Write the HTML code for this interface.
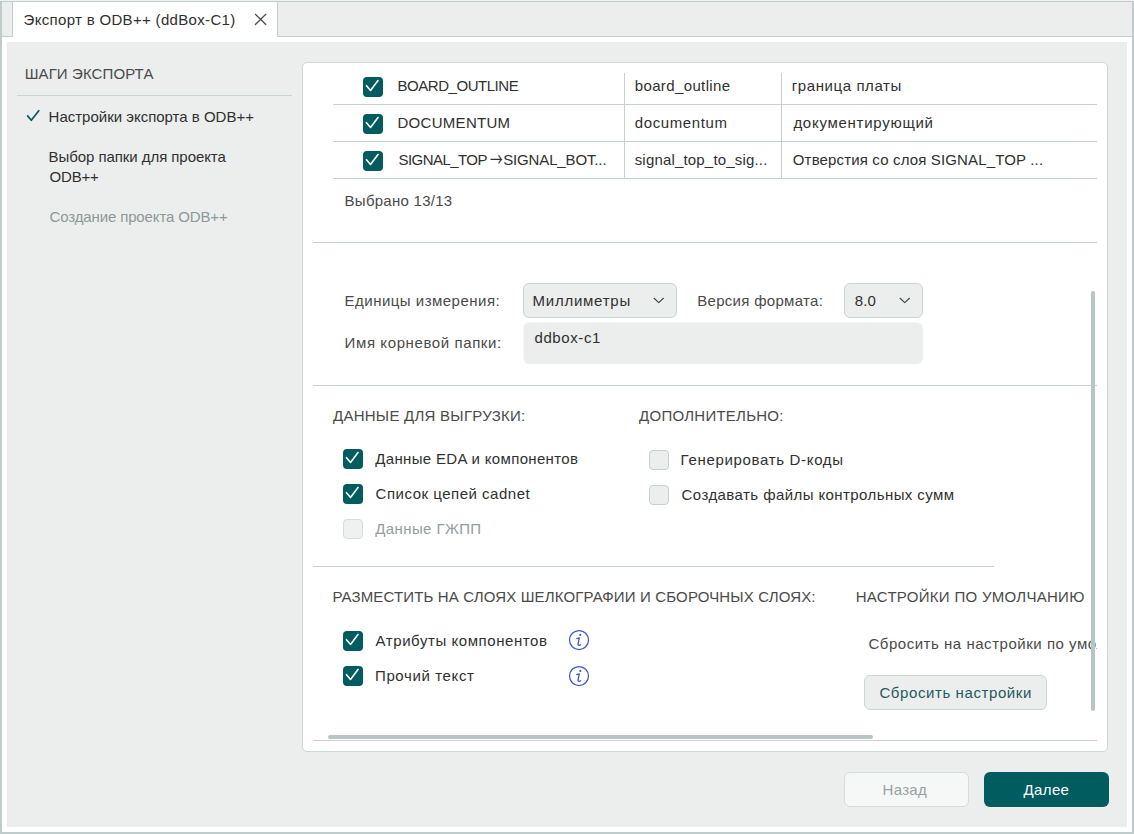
<!DOCTYPE html>
<html lang="ru">
<head>
<meta charset="utf-8">
<title>Экспорт в ODB++</title>
<style>
html,body{margin:0;padding:0}
body{width:1134px;height:834px;position:relative;overflow:hidden;background:#fff;font-family:"Liberation Sans",sans-serif;font-size:15px;color:#2b2b2b}
.abs{position:absolute}
.t{position:absolute;white-space:nowrap;line-height:20px;height:20px}
.hl{position:absolute;height:1px;background:#c6d2d2}
.vl{position:absolute;width:1px;background:#c6d2d2}
.cb{position:absolute;width:20px;height:20px;border-radius:4px;background:#005c5f;box-sizing:border-box}
.cb svg{position:absolute;left:0;top:0}
.cb.off{background:#eceeed;border:1px solid #c3d1d1}
.cb.dis{background:#eff1f0;border:1px solid #d3dddd}
.info{position:absolute;width:22px;height:22px}
</style>
</head>
<body>
<!-- window frame -->
<div class="abs" style="left:0;top:0;width:1134px;height:834px;background:#fff"></div>
<div class="abs" style="left:0;top:0;width:1134px;height:1px;background:#eef1f1"></div>
<div class="abs" style="left:0;top:1px;width:1134px;height:1px;background:#c3cfcf"></div>
<div class="abs" style="left:0;top:1px;width:2px;height:833px;background:#c0cccc"></div>
<div class="abs" style="left:1132px;top:1px;width:2px;height:833px;background:#c0cccc"></div>
<div class="abs" style="left:0;top:832px;width:1134px;height:2px;background:#c0cccc"></div>
<!-- tab bar -->
<div class="abs" style="left:2px;top:2px;width:1130px;height:34px;background:#eceeed"></div>
<div class="abs" style="left:2px;top:36px;width:1130px;height:1px;background:#c3cfcf"></div>
<div class="abs" style="left:12px;top:2px;width:266px;height:35px;background:#fff;border-left:1px solid #c3cfcf;border-right:1px solid #c3cfcf;box-sizing:border-box"></div>
<svg class="abs" style="left:253px;top:12px" width="16" height="16" viewBox="0 0 16 16"><path d="M2.4 2.3 L12.8 12.5 M12.8 2.3 L2.4 12.5" stroke="#475252" stroke-width="1.25" fill="none" stroke-linecap="round"/></svg>
<!-- main gray panel -->
<div class="abs" style="left:7px;top:42px;width:1120px;height:785px;background:#eceeed"></div>
<!-- sidebar -->
<div class="hl" style="left:17px;top:95px;width:275px;background:#c9d5d5"></div>
<svg class="abs" style="left:25px;top:108px" width="16" height="16" viewBox="0 0 16 16"><path d="M2.6 7.9 L6.3 12.3 L13.8 2.7" stroke="#005c5f" stroke-width="1.7" fill="none" stroke-linecap="round" stroke-linejoin="round"/></svg>
<!-- card -->
<div class="abs" style="left:302px;top:62px;width:806px;height:690px;background:#fff;border:1px solid #cdd8d8;border-radius:5px;box-sizing:border-box"></div>
<!-- table -->
<div class="hl" style="left:333px;top:104px;width:764px"></div>
<div class="hl" style="left:333px;top:141px;width:764px"></div>
<div class="hl" style="left:333px;top:178px;width:764px"></div>
<div class="vl" style="left:624px;top:73px;height:105px"></div>
<div class="vl" style="left:781px;top:73px;height:105px"></div>
<div class="cb" style="left:363px;top:77px"><svg width="20" height="20" viewBox="0 0 20 20"><path d="M3.5 8.7 L7.5 13.5 L15 3.5" stroke="#fff" stroke-width="1.6" fill="none" stroke-linecap="round" stroke-linejoin="round"/></svg></div>
<div class="cb" style="left:363px;top:114px"><svg width="20" height="20" viewBox="0 0 20 20"><path d="M3.5 8.7 L7.5 13.5 L15 3.5" stroke="#fff" stroke-width="1.6" fill="none" stroke-linecap="round" stroke-linejoin="round"/></svg></div>
<div class="cb" style="left:363px;top:151px"><svg width="20" height="20" viewBox="0 0 20 20"><path d="M3.5 8.7 L7.5 13.5 L15 3.5" stroke="#fff" stroke-width="1.6" fill="none" stroke-linecap="round" stroke-linejoin="round"/></svg></div>
<!-- section separators -->
<div class="hl" style="left:313px;top:242px;width:784px"></div>
<div class="hl" style="left:313px;top:385px;width:784px"></div>
<div class="hl" style="left:313px;top:566px;width:681px"></div>
<div class="hl" style="left:313px;top:740px;width:784px"></div>
<!-- selects / input -->
<div class="abs" style="left:523px;top:283px;width:154px;height:35px;background:#eceeed;border:1px solid #c9d6d6;border-radius:6px;box-sizing:border-box"></div>
<svg class="abs" style="left:651px;top:293px" width="16" height="16" viewBox="0 0 16 16"><path d="M3.1 5.3 L7.75 9.6 L12.4 5.3" stroke="#404a4a" stroke-width="1.2" fill="none" stroke-linecap="round" stroke-linejoin="round"/></svg>
<div class="abs" style="left:844px;top:283px;width:79px;height:35px;background:#eceeed;border:1px solid #c9d6d6;border-radius:6px;box-sizing:border-box"></div>
<svg class="abs" style="left:897px;top:293px" width="16" height="16" viewBox="0 0 16 16"><path d="M3.1 5.3 L7.75 9.6 L12.4 5.3" stroke="#404a4a" stroke-width="1.2" fill="none" stroke-linecap="round" stroke-linejoin="round"/></svg>
<div class="abs" style="left:523px;top:322px;width:400px;height:42px;background:#eceeed;border:1px solid #f4f6f5;border-bottom-color:#eceeed;border-right-color:#eff1f0;border-radius:6px;box-sizing:border-box"></div>
<!-- checkboxes: data -->
<div class="cb" style="left:343px;top:449px"><svg width="20" height="20" viewBox="0 0 20 20"><path d="M3.5 8.7 L7.5 13.5 L15 3.5" stroke="#fff" stroke-width="1.6" fill="none" stroke-linecap="round" stroke-linejoin="round"/></svg></div>
<div class="cb" style="left:343px;top:484px"><svg width="20" height="20" viewBox="0 0 20 20"><path d="M3.5 8.7 L7.5 13.5 L15 3.5" stroke="#fff" stroke-width="1.6" fill="none" stroke-linecap="round" stroke-linejoin="round"/></svg></div>
<div class="cb dis" style="left:343px;top:519px"></div>
<div class="cb off" style="left:649px;top:450px"></div>
<div class="cb off" style="left:649px;top:485px"></div>
<!-- checkboxes: place -->
<div class="cb" style="left:343px;top:631px"><svg width="20" height="20" viewBox="0 0 20 20"><path d="M3.5 8.7 L7.5 13.5 L15 3.5" stroke="#fff" stroke-width="1.6" fill="none" stroke-linecap="round" stroke-linejoin="round"/></svg></div>
<div class="cb" style="left:343px;top:666px"><svg width="20" height="20" viewBox="0 0 20 20"><path d="M3.5 8.7 L7.5 13.5 L15 3.5" stroke="#fff" stroke-width="1.6" fill="none" stroke-linecap="round" stroke-linejoin="round"/></svg></div>
<svg class="info" style="left:568px;top:629px" viewBox="0 0 22 22"><circle cx="11" cy="11" r="9.5" fill="none" stroke="#3f57c8" stroke-width="1.25"/><circle cx="12.3" cy="5.9" r="1.05" fill="#3f57c8"/><path d="M8.8 9.6 L11.3 8.8 L10 15 Q9.8 16.5 11.2 16.3 L12.6 15.8" fill="none" stroke="#3f57c8" stroke-width="1.25" stroke-linecap="round" stroke-linejoin="round"/></svg>
<svg class="info" style="left:568px;top:665px" viewBox="0 0 22 22"><circle cx="11" cy="11" r="9.5" fill="none" stroke="#3f57c8" stroke-width="1.25"/><circle cx="12.3" cy="5.9" r="1.05" fill="#3f57c8"/><path d="M8.8 9.6 L11.3 8.8 L10 15 Q9.8 16.5 11.2 16.3 L12.6 15.8" fill="none" stroke="#3f57c8" stroke-width="1.25" stroke-linecap="round" stroke-linejoin="round"/></svg>
<!-- reset button -->
<div class="abs" style="left:864px;top:675px;width:183px;height:35px;background:#eceeed;border:1px solid #cbd7d7;border-radius:6px;box-sizing:border-box"></div>
<!-- nav buttons -->
<div class="abs" style="left:844px;top:772px;width:125px;height:35px;background:#f6f8f7;border:1px solid #d3dddd;border-radius:6px;box-sizing:border-box"></div>
<div class="abs" style="left:984px;top:772px;width:125px;height:35px;background:#005c5f;border-radius:6px"></div>
<!-- texts -->
<span class="t" style="left:23.6px;top:10px;color:#303030;letter-spacing:0.322px">Экспорт в ODB++ (ddBox-C1)</span>
<span class="t" style="left:24.7px;top:64px;color:#4a4a4a;letter-spacing:0.104px">ШАГИ ЭКСПОРТА</span>
<span class="t" style="left:48.6px;top:107px;color:#303030;letter-spacing:-0.004px">Настройки экспорта в ODB++</span>
<span class="t" style="left:48.6px;top:147px;color:#303030;letter-spacing:-0.064px">Выбор папки для проекта</span>
<span class="t" style="left:49.6px;top:167px;color:#303030;letter-spacing:-0.216px">ODB++</span>
<span class="t" style="left:49.6px;top:207px;color:#8e9898;letter-spacing:-0.137px">Создание проекта ODB++</span>
<span class="t" style="left:397.5px;top:76px;color:#303030;letter-spacing:-0.457px">BOARD_OUTLINE</span>
<span class="t" style="left:397.5px;top:113px;color:#303030;letter-spacing:0.29px">DOCUMENTUM</span>
<div><span class="t" style="left:398.5px;top:150px;color:#303030;letter-spacing:-0.558px">SIGNAL_TOP</span><span class="t" style="left:489.8px;top:143px;line-height:30px;height:30px;color:#303030;font-family:'Noto Sans CJK SC',sans-serif;font-size:18px;transform:scaleX(0.7);transform-origin:0 0">→</span><span class="t" style="left:503.2px;top:150px;color:#303030;letter-spacing:-0.139px">SIGNAL_BOT...</span></div>
<span class="t" style="left:634.7px;top:76px;color:#303030;letter-spacing:0.378px">board_outline</span>
<span class="t" style="left:634.7px;top:113px;color:#303030;letter-spacing:0.632px">documentum</span>
<span class="t" style="left:634.7px;top:150px;color:#303030;letter-spacing:0.179px">signal_top_to_sig...</span>
<span class="t" style="left:791.8px;top:76px;color:#303030;letter-spacing:0.585px">граница платы</span>
<span class="t" style="left:793.4px;top:113px;color:#303030;letter-spacing:0.729px">документирующий</span>
<span class="t" style="left:792.8px;top:150px;color:#303030;letter-spacing:0.151px">Отверстия со слоя SIGNAL_TOP ...</span>
<span class="t" style="left:344.6px;top:191px;color:#4a4a4a;letter-spacing:0.263px">Выбрано 13/13</span>
<span class="t" style="left:344.6px;top:291px;color:#4a4a4a;letter-spacing:0.481px">Единицы измерения:</span>
<span class="t" style="left:532.6px;top:291px;color:#303030;letter-spacing:0.741px">Миллиметры</span>
<span class="t" style="left:697.2px;top:291px;color:#4a4a4a;letter-spacing:0.303px">Версия формата:</span>
<span class="t" style="left:854.7px;top:291px;color:#303030;letter-spacing:0.145px">8.0</span>
<span class="t" style="left:344.6px;top:333px;color:#4a4a4a;letter-spacing:0.598px">Имя корневой папки:</span>
<span class="t" style="left:534.5px;top:328px;color:#303030;letter-spacing:0.591px">ddbox-c1</span>
<span class="t" style="left:333px;top:406px;color:#4a4a4a;letter-spacing:0.256px">ДАННЫЕ ДЛЯ ВЫГРУЗКИ:</span>
<span class="t" style="left:639.1px;top:406px;color:#4a4a4a;letter-spacing:0.252px">ДОПОЛНИТЕЛЬНО:</span>
<span class="t" style="left:375.3px;top:449px;color:#303030;letter-spacing:0.338px">Данные EDA и компонентов</span>
<span class="t" style="left:375.6px;top:484px;color:#303030;letter-spacing:0.51px">Список цепей cadnet</span>
<span class="t" style="left:375.3px;top:519px;color:#929d9d;letter-spacing:0.389px">Данные ГЖПП</span>
<span class="t" style="left:680.6px;top:450px;color:#303030;letter-spacing:0.679px">Генерировать D-коды</span>
<span class="t" style="left:681.6px;top:485px;color:#303030;letter-spacing:0.422px">Создавать файлы контрольных сумм</span>
<span class="t" style="left:332.4px;top:587px;color:#4a4a4a;letter-spacing:0.146px">РАЗМЕСТИТЬ НА СЛОЯХ ШЕЛКОГРАФИИ И СБОРОЧНЫХ СЛОЯХ:</span>
<span class="t" style="left:855.7px;top:587px;color:#4a4a4a;letter-spacing:0.29px">НАСТРОЙКИ ПО УМОЛЧАНИЮ</span>
<span class="t" style="left:375.6px;top:631px;color:#303030;letter-spacing:0.566px">Атрибуты компонентов</span>
<span class="t" style="left:375px;top:666px;color:#303030;letter-spacing:0.623px">Прочий текст</span>
<div class="abs" style="left:860px;top:630px;width:237px;height:40px;overflow:hidden"><span class="t" style="left:8.4px;top:4px;color:#4a4a4a;letter-spacing:0.532px">Сбросить на настройки по умолчанию</span></div>
<span class="t" style="left:879.4px;top:683px;color:#1f5a5d;letter-spacing:0.596px">Сбросить настройки</span>
<span class="t" style="left:882.6px;top:780px;color:#9aa0a0;letter-spacing:0.293px">Назад</span>
<span class="t" style="left:1023.6px;top:780px;color:#ffffff;letter-spacing:0.351px">Далее</span>
<!-- scrollbars -->
<div class="abs" style="left:1091px;top:291px;width:4px;height:420px;background:#b9c5c5;border-radius:2px"></div>
<div class="abs" style="left:328px;top:735px;width:545px;height:4px;background:#b9c5c5;border-radius:2px"></div>
</body>
</html>
